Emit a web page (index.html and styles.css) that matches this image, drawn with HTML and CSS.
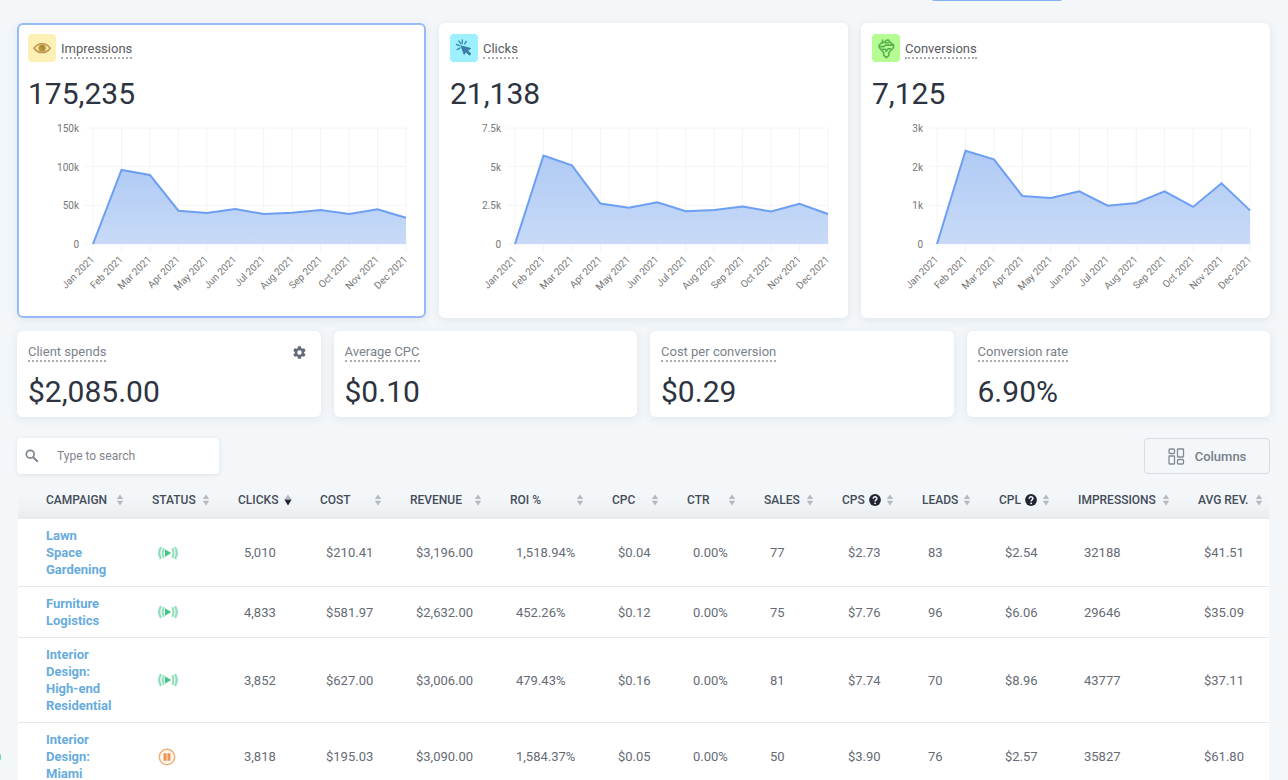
FILE: index.html
```html
<!DOCTYPE html>
<html lang="en">
<head>
<meta charset="utf-8">
<meta name="viewport" content="width=device-width, initial-scale=1">
<title>Campaign statistics</title>
<link rel="stylesheet" href="styles.css">
</head>
<body>
<svg class="sprite" aria-hidden="true">
  <symbol id="i-sort" viewBox="0 0 8 12"><path d="M4 0.5 7.200 5H.8z"/><path d="M.8 6.800h6.400L4 11.500z"/></symbol>
  <symbol id="i-live" viewBox="0 0 20 14"><g fill="none" stroke="#93dfbb" stroke-width="2.400" stroke-linecap="round"><path d="M2.600 2c-1.800 3.200-1.800 6.800 0 10M17.400 2c1.800 3.200 1.800 6.800 0 10"/><path stroke-width="2" d="M5.600 2.800c-1.200 2.600-1.200 5.800 0 8.400M14.600 2.800c1.200 2.600 1.200 5.800 0 8.400"/></g><path fill="#45c689" d="M7 3.300 13.200 7 7 10.700z"/></symbol>
  <symbol id="i-pause" viewBox="0 0 18 18"><circle cx="9" cy="9" r="7.700" fill="#fff8f1" stroke="#efb17c" stroke-width="1.500"/><path fill="#ee9450" d="M5.500 5.200h3.100v7.600H5.500zM9.400 5.200h3.100v7.600H9.400z"/></symbol>
  <symbol id="i-help" viewBox="0 0 12 12"><circle cx="6" cy="6" r="5.900" fill="#1f2633"/><path d="M4.200 4.700c0-2.600 3.800-2.400 3.700-.2C7.900 5.900 6.100 5.800 6.100 7.400" fill="none" stroke="#fff" stroke-width="1.400"/><circle cx="6.100" cy="9.300" r=".9" fill="#fff"/></symbol>
</svg>

<header class="toolbar"><button class="primary" type="button" aria-label="Apply"></button></header>

<main class="page">
  <section class="charts">
    <article class="card chart-card selected">
      <h2 class="chart-title">
        <span class="badge badge-yellow"><svg viewBox="0 0 28 28" width="28" height="28"><path d="M6 14.200c4-5.800 12.200-5.800 16.200 0-4 5.800-12.200 5.800-16.200 0z" fill="#f7e29c" stroke="#bf9558" stroke-width="1.500"/><circle cx="14.200" cy="14.200" r="3.600" fill="#b8963c"/><path d="M13.200 12.400h1.800v3" fill="none" stroke="#8f7a2a"/></svg></span>
        <span class="hint">Impressions</span>
      </h2>
      <p class="figure">175,235</p>
      <svg class="chart" data-chart="impressions" viewBox="0 0 387 180" role="img" aria-label="Impressions by month"></svg>
    </article>
    <article class="card chart-card">
      <h2 class="chart-title">
        <span class="badge badge-cyan"><svg viewBox="0 0 28 28" width="28" height="28"><path d="M12.300 6v3.600M6.500 10.500l3.200 1.100M8.800 7l2 2.600M16.200 7.300l-1.500 2.500M7.200 15.600l2.900-1.700" fill="none" stroke="#3d8fae" stroke-width="1.400" stroke-linecap="round"/><path d="M11 11.800l9.800 2.600-3.100 2 3.300 3.300-1.600 1.500-3.300-3.300-2 2.500z" fill="#3e7fa8" stroke="#356f96" stroke-width=".7" stroke-linejoin="round"/></svg></span>
        <span class="hint">Clicks</span>
      </h2>
      <p class="figure">21,138</p>
      <svg class="chart" data-chart="clicks" viewBox="0 0 387 180" role="img" aria-label="Clicks by month"></svg>
    </article>
    <article class="card chart-card">
      <h2 class="chart-title">
        <span class="badge badge-green"><svg viewBox="0 0 28 28" width="28" height="28"><g fill="none" stroke="#58b04e" stroke-width="1.600" stroke-linejoin="round" stroke-linecap="round"><path d="M10.500 8.200 7.200 11v2.500l4.600 5.300v2.700l2.500 2.200 2.500-2.200v-2.700l4.700-5.300V11l-3.600-2.800-1.600-2.200-2 .4-2 1.600z"/><path d="M7.500 12.600h4.300l1.800-1.500h7.500M10.500 6v3M13 8.800h3.500M10.500 15.300h2.800l1 2 1.600-2.400h2.500"/></g></svg></span>
        <span class="hint">Conversions</span>
      </h2>
      <p class="figure">7,125</p>
      <svg class="chart" data-chart="conversions" viewBox="0 0 387 180" role="img" aria-label="Conversions by month"></svg>
    </article>
  </section>

  <section class="stats">
    <article class="card stat">
      <div class="stat-head"><h2 class="hint">Client spends</h2>
        <button class="gear" type="button" aria-label="Client spends settings"><svg viewBox="0 0 24 24" width="15" height="15"><path fill="#646b78" d="M19.400 13a7.500 7.500 0 0 0 0-2l2.100-1.600a.5.5 0 0 0 .1-.6l-2-3.500a.5.5 0 0 0-.6-.2l-2.500 1a7.300 7.300 0 0 0-1.700-1l-.4-2.600a.5.500 0 0 0-.5-.5h-4a.5.500 0 0 0-.5.500L9 5.100a7.700 7.700 0 0 0-1.700 1l-2.500-1a.5.5 0 0 0-.6.2l-2 3.500a.5.5 0 0 0 .1.600L4.500 11a8 8 0 0 0 0 2l-2.200 1.600a.5.500 0 0 0-.1.600l2 3.500c.1.200.4.300.6.200l2.500-1c.5.400 1.100.7 1.700 1l.4 2.600c0 .300.300.500.500.500h4c.300 0 .500-.2.500-.5l.4-2.600c.6-.3 1.200-.6 1.700-1l2.500 1c.2.100.500 0 .6-.2l2-3.500a.5.500 0 0 0-.1-.6zM12 15.500a3.500 3.500 0 1 1 0-7 3.500 3.500 0 0 1 0 7z"/></svg></button></div>
      <p class="figure">$2,085.00</p>
    </article>
    <article class="card stat"><div class="stat-head"><h2 class="hint">Average CPC</h2></div><p class="figure">$0.10</p></article>
    <article class="card stat"><div class="stat-head"><h2 class="hint">Cost per conversion</h2></div><p class="figure">$0.29</p></article>
    <article class="card stat"><div class="stat-head"><h2 class="hint">Conversion rate</h2></div><p class="figure">6.90%</p></article>
  </section>

  <section class="actions">
    <label class="search">
      <svg viewBox="0 0 14 14" width="14" height="14" aria-hidden="true"><circle cx="5.200" cy="5.200" r="3.900" fill="none" stroke="#80868f" stroke-width="1.700"/><path d="M8.200 8.200 12.800 12.800" stroke="#80868f" stroke-width="2"/></svg>
      <input type="text" placeholder="Type to search" aria-label="Search campaigns">
    </label>
    <button class="columns" type="button">
      <svg viewBox="0 0 17 17" width="17" height="17" aria-hidden="true"><g fill="none" stroke="#848a93" stroke-width="1.300"><rect x="1" y="1" width="5.500" height="4.500" rx="1"/><rect x="9.500" y="1" width="6" height="8" rx=".5"/><rect x="1" y="8" width="5.500" height="8" rx=".5"/><rect x="9.500" y="11.500" width="6" height="4.500" rx="1"/></g></svg>
      Columns
    </button>
  </section>

  <table class="campaigns">
    <colgroup>
      <col class="w106"><col class="w86"><col class="w82"><col class="w90"><col class="w100"><col class="w102"><col class="w75"><col class="w77"><col class="w78"><col class="w80"><col class="w77"><col class="w79"><col class="w120"><col class="w99">
    </colgroup>
    <thead><tr></tr></thead>
    <tbody></tbody>
  </table>
</main>
<span class="bubble" aria-hidden="true"></span>
<script src="app.js"></script>
</body>
</html>
```

FILE: styles.css
```css
* { box-sizing: border-box; }

body {
  margin: 0;
  background: #f3f7fa;
  color: #666b75;
  font-family: Roboto, "Liberation Sans", sans-serif;
  font-size: 13px;
  line-height: 17px;
  overflow: hidden;
}

h2, p { margin: 0; font-weight: 400; }
button, input { font: inherit; color: inherit; }
button { padding: 0; border: 0; background: none; cursor: pointer; }
.sprite { display: none; }

.toolbar {
  display: flex;
  justify-content: flex-end;
  margin-top: -35px;
  padding: 0 226px 22px 0;
}
.primary { width: 130px; height: 36px; border-radius: 2px; background: #80b3f7; }

.page { padding: 0 18px 0 17px; }

.card {
  background: #fff;
  border-radius: 6px;
  box-shadow: 0 2px 10px rgba(40, 60, 80, 0.09);
}

.charts { display: grid; grid-template-columns: repeat(3, 1fr); gap: 13px; }
.chart-card { padding: 9px 9px 18px; border: 2px solid #fff; }
.selected { border-color: #98bbf7; }
.chart-title { display: flex; align-items: center; gap: 5px; }
.badge { width: 28px; height: 28px; border-radius: 4px; }
.badge svg { display: block; }
.badge-yellow { background: #fdf0b5; }
.badge-cyan { background: #9cf0ff; }
.badge-green { background: #b5fd92; }

.hint {
  border-bottom: 2px dotted #a9acb1;
  font-size: 13px;
  line-height: 17px;
}
.chart-title .hint { margin-top: 2px; color: #585b61; }

.figure { color: #2d333f; font-size: 30px; line-height: 36px; }
.chart-card .figure { margin-top: 14px; }

.chart { display: block; width: 100%; margin-top: 6px; overflow: visible; }
.chart text { font-size: 10px; fill: #777; text-anchor: end; }
.chart .grid { stroke: #f4f4f5; stroke-width: 1; fill: none; }
.chart .line { stroke: #6c9ff3; stroke-width: 2; fill: none; }

.stats { display: grid; grid-template-columns: repeat(4, 1fr); gap: 13px; margin-top: 13px; }
.stat { padding: 12px 11px 7px; }
.stat-head { display: flex; justify-content: space-between; align-items: center; color: #7c828b; }
.stat .figure { margin-top: 12px; }
.gear { margin-right: 3px; height: 15px; }
.gear svg { display: block; }

.actions { display: flex; justify-content: space-between; margin-top: 21px; }
.search {
  display: flex;
  align-items: center;
  gap: 18px;
  width: 202px;
  height: 36px;
  padding: 0 8px;
  background: #fff;
  border-radius: 4px;
  box-shadow: 0 1px 4px rgba(40, 60, 80, 0.1);
}
.search svg { flex: none; }
.search input { width: 100%; min-width: 0; padding: 0; border: 0; outline: 0; background: none; font-size: 12px; }
.search input::placeholder { color: #80858d; opacity: 1; }
.columns {
  display: flex;
  align-items: center;
  justify-content: center;
  gap: 10px;
  width: 126px;
  height: 36px;
  border: 1px solid #d9dde1;
  border-radius: 4px;
  color: #767d87;
  font-weight: 500;
}

.campaigns {
  width: 100%;
  padding: 0 1px;
  table-layout: fixed;
  border-collapse: separate;
  border-spacing: 0;
}
.campaigns th {
  height: 45px;
  padding: 7px 0 0 28px;
  font-weight: 500;
  text-align: left;
}
.campaigns thead { background: linear-gradient(#f3f7fa 45%, #eff3f6 75%, #e7ebee); }
.campaigns th:last-child { padding-right: 6px; }
.campaigns th button {
  display: flex;
  align-items: center;
  width: 100%;
  color: #454c59;
  font-size: 12px;
  white-space: nowrap;
}
.sort { width: 8px; height: 12px; margin-left: auto; flex: none; fill: #b5b9be; }
.sort.desc { fill: #222834; }
.help { width: 12px; height: 12px; margin-left: 4px; }

.campaigns td {
  padding: 8px 0 8px 34px;
  background: #fff;
  border-bottom: 1px solid #e7e9eb;
  vertical-align: middle;
  white-space: nowrap;
}
.campaigns td:first-child { padding-left: 28px; }
.campaigns a { color: #68acdd; font-weight: 700; text-decoration: none; }
.campaigns td svg { display: block; }

.bubble {
  position: fixed;
  left: -13px;
  top: 750px;
  width: 14px;
  height: 14px;
  border-radius: 50%;
  background: #55cc98;
}

.w75 { width: 75px; }
.w77 { width: 77px; }
.w78 { width: 78px; }
.w79 { width: 79px; }
.w80 { width: 80px; }
.w82 { width: 82px; }
.w86 { width: 86px; }
.w90 { width: 90px; }
.w99 { width: 99px; }
.w100 { width: 100px; }
.w102 { width: 102px; }
.w106 { width: 106px; }
.w120 { width: 120px; }
```

FILE: app.js
```js
const months = ["Jan", "Feb", "Mar", "Apr", "May", "Jun", "Jul", "Aug", "Sep", "Oct", "Nov", "Dec"];
const series = {
  impressions: { max: 150, ticks: ["0", "50k", "100k", "150k"], data: [0, 95.7, 89.2, 43, 40.1, 45.3, 38.8, 40.3, 44, 38.8, 45, 34] },
  clicks: { max: 7.5, ticks: ["0", "2.5k", "5k", "7.5k"], data: [0, 5.72, 5.08, 2.62, 2.35, 2.7, 2.12, 2.2, 2.42, 2.1, 2.59, 1.94] },
  conversions: { max: 3, ticks: ["0", "1k", "2k", "3k"], data: [0, 2.41, 2.19, 1.24, 1.19, 1.36, 0.99, 1.06, 1.36, 0.96, 1.57, 0.87] }
};

document.querySelectorAll("[data-chart]").forEach((svg) => {
  const name = svg.dataset.chart;
  const { max, ticks, data } = series[name];
  const left = 65, right = 378, top = 10, bottom = 126;
  const x = (i) => left + (i * (right - left)) / 11;
  const y = (v) => bottom - (v / max) * (bottom - top);
  const points = data.map((v, i) => `${x(i).toFixed(1)},${y(v).toFixed(1)}`).join(" ");
  let out = `<defs><linearGradient id="fill-${name}" x1="0" y1="0" x2="0" y2="1"><stop offset="0" stop-color="#b0cbf5"/><stop offset="1" stop-color="#c8daf7"/></linearGradient></defs>`;
  ticks.forEach((t, i) => {
    const ty = y((max * i) / 3);
    out += `<path class="grid" d="M${left - 8} ${ty}H${right}"/><text x="51" y="${ty + 4}">${t}</text>`;
  });
  months.forEach((m, i) => {
    out += `<path class="grid" d="M${x(i)} ${top}V${bottom + 8}"/><text transform="translate(${x(i) + 2} 142) rotate(-45)">${m} 2021</text>`;
  });
  out += `<polygon fill="url(#fill-${name})" points="${points} ${right},${bottom} ${left},${bottom}"/><polyline class="line" points="${points}"/>`;
  svg.innerHTML = out;
});

const heads = ["CAMPAIGN", "STATUS", "CLICKS", "COST", "REVENUE", "ROI %", "CPC", "CTR", "SALES", "CPS", "LEADS", "CPL", "IMPRESSIONS", "AVG REV."];
const sortIcon = (active) => active
  ? '<svg class="sort desc" viewBox="0 0 8 12"><path fill="#b5b9be" d="M4 .5 7.200 5H.8z"/><path d="M.3 5.500h7.400L4 11.500z"/></svg>'
  : '<svg class="sort"><use href="#i-sort"/></svg>';
document.querySelector(".campaigns thead tr").innerHTML = heads.map((h) => {
  const help = h === "CPS" || h === "CPL" ? '<svg class="help"><use href="#i-help"/></svg>' : "";
  return `<th scope="col"><button type="button">${h}${help}${sortIcon(h === "CLICKS")}</button></th>`;
}).join("");

const rows = [
  ["Lawn<br>Space<br>Gardening", "live", "5,010", "$210.41", "$3,196.00", "1,518.94%", "$0.04", "0.00%", "77", "$2.73", "83", "$2.54", "32188", "$41.51"],
  ["Furniture<br>Logistics", "live", "4,833", "$581.97", "$2,632.00", "452.26%", "$0.12", "0.00%", "75", "$7.76", "96", "$6.06", "29646", "$35.09"],
  ["Interior<br>Design:<br>High-end<br>Residential", "live", "3,852", "$627.00", "$3,006.00", "479.43%", "$0.16", "0.00%", "81", "$7.74", "70", "$8.96", "43777", "$37.11"],
  ["Interior<br>Design:<br>Miami", "paused", "3,818", "$195.03", "$3,090.00", "1,584.37%", "$0.05", "0.00%", "50", "$3.90", "76", "$2.57", "35827", "$61.80"]
];
const status = {
  live: '<svg width="20" height="14" role="img" aria-label="Live"><use href="#i-live"/></svg>',
  paused: '<svg width="18" height="18" role="img" aria-label="Paused"><use href="#i-pause"/></svg>'
};
document.querySelector(".campaigns tbody").innerHTML = rows.map(([name, state, ...cells]) =>
  `<tr><td><a href="#">${name}</a></td><td>${status[state]}</td>${cells.map((c) => `<td>${c}</td>`).join("")}</tr>`
).join("");
```
